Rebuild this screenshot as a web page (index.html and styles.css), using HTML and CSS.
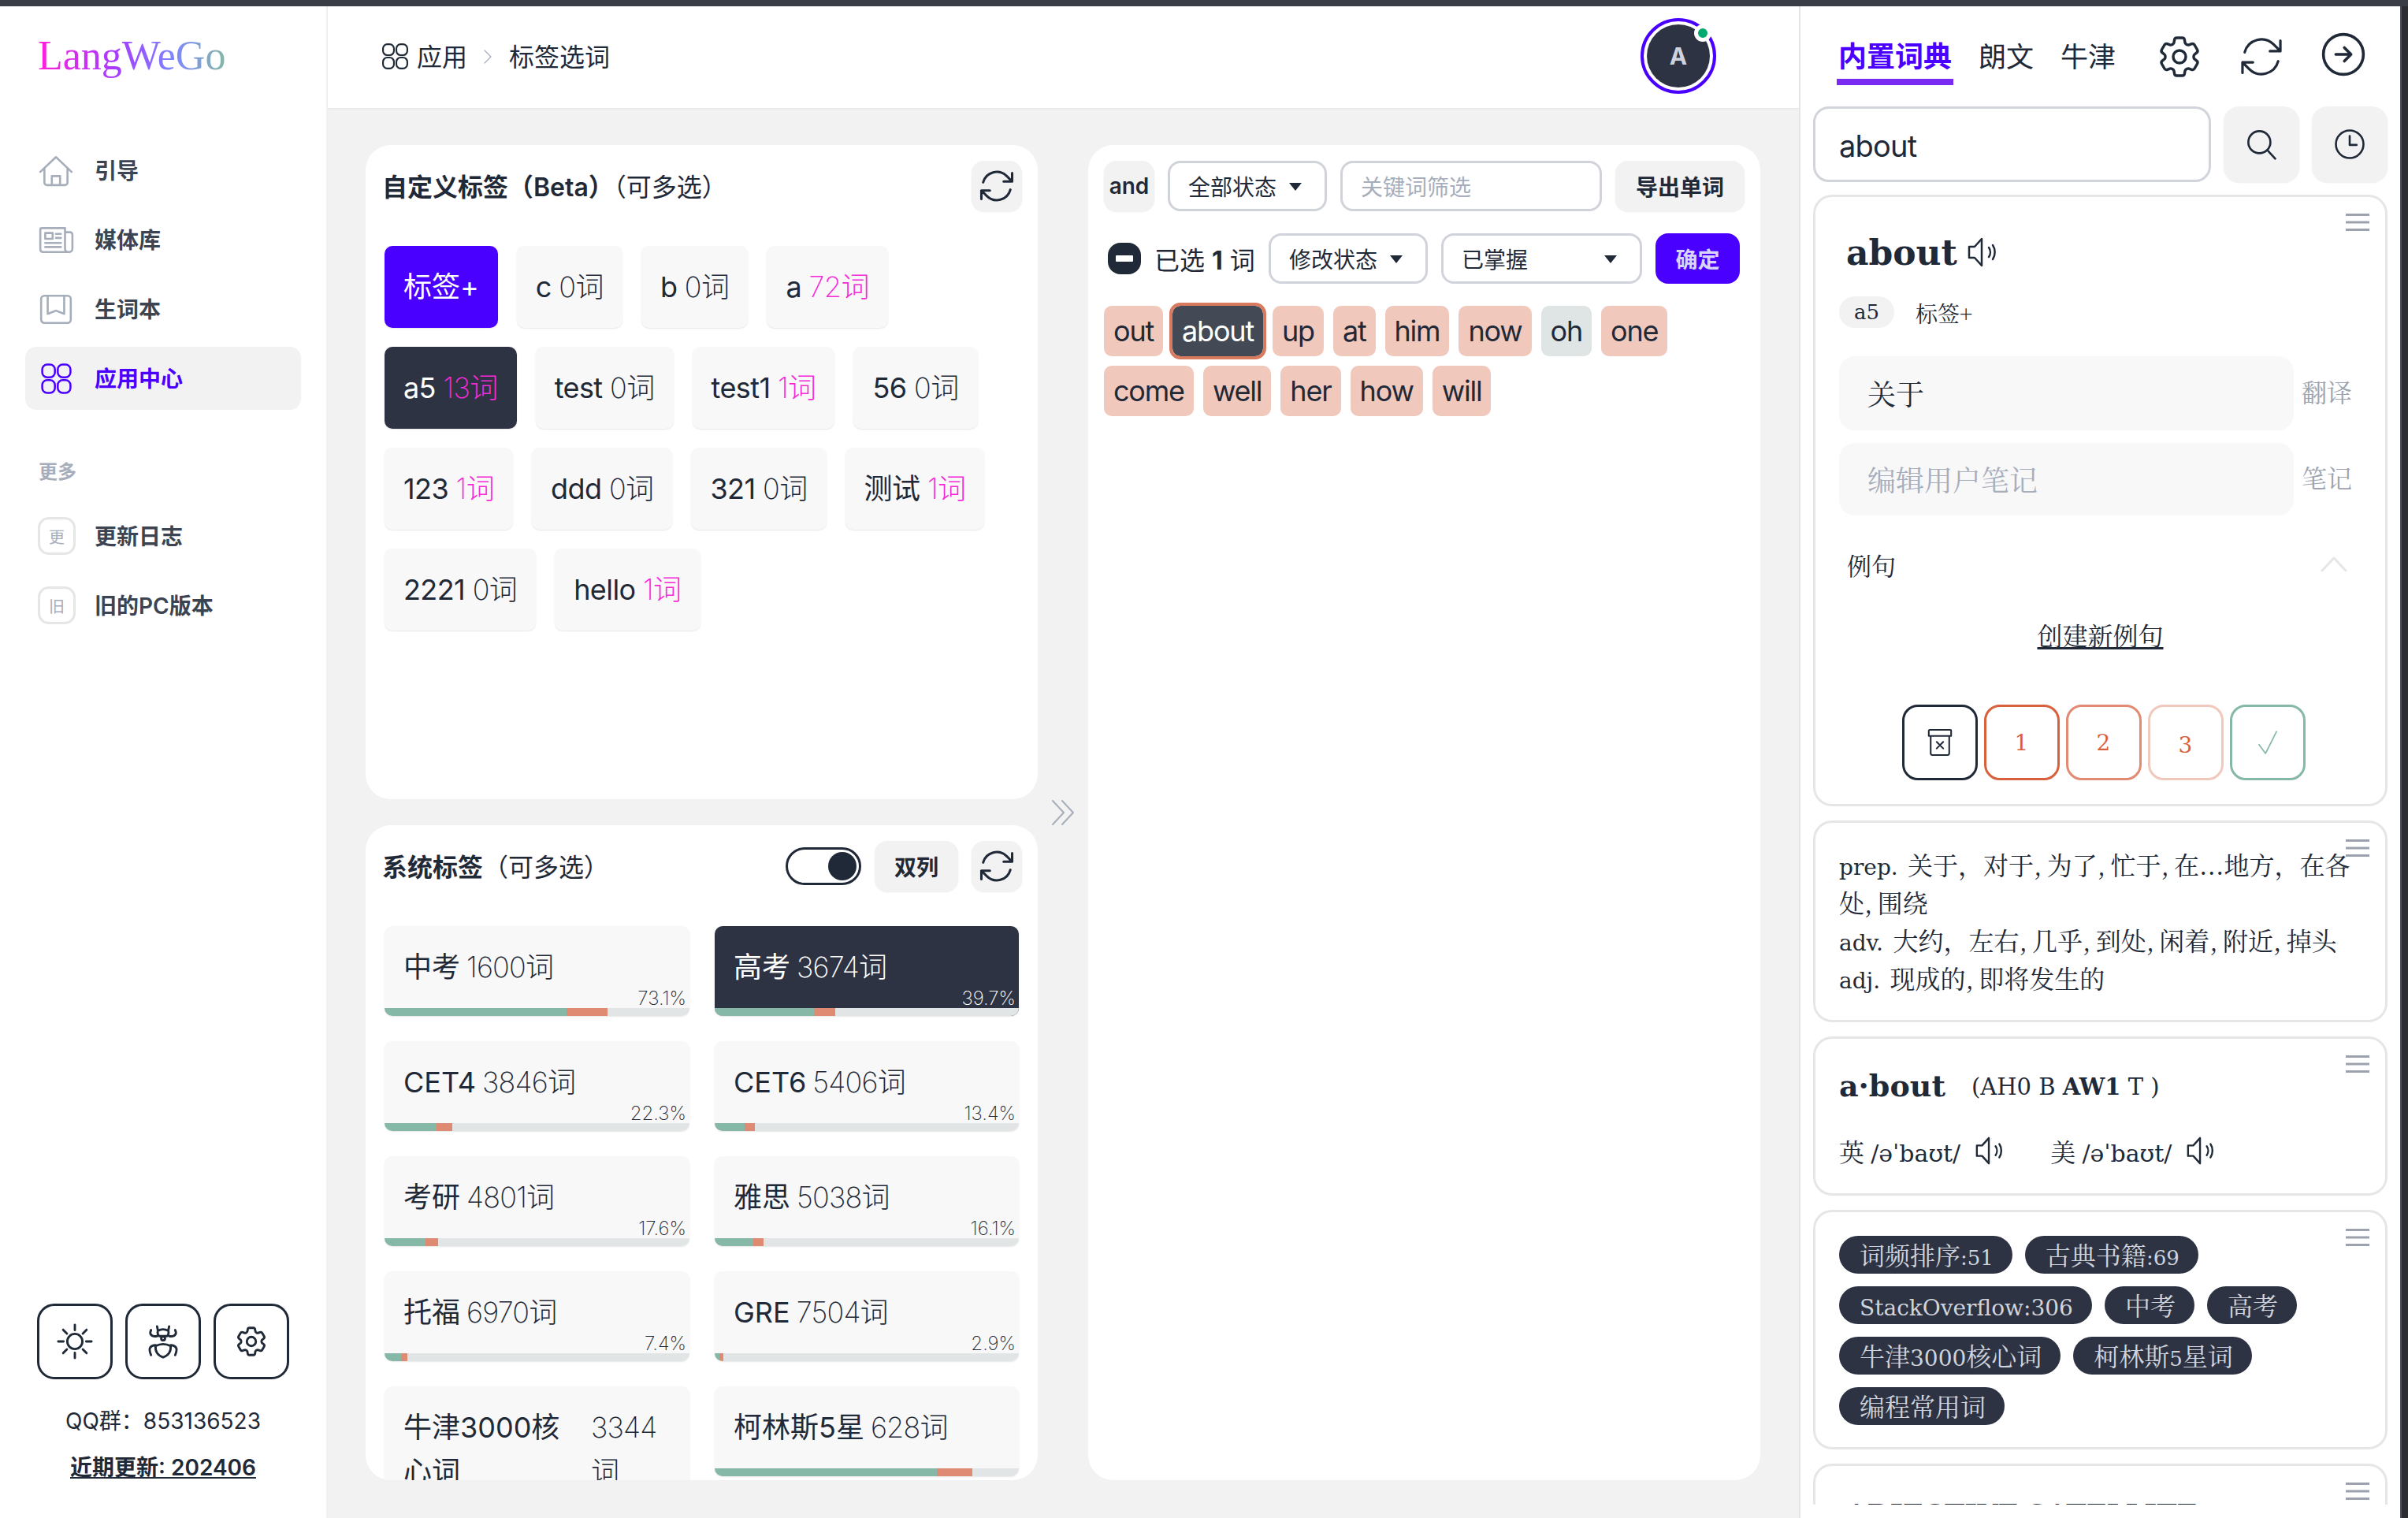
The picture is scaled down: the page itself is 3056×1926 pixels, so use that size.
FILE: index.html
```html
<!DOCTYPE html>
<html lang="zh">
<head>
<meta charset="utf-8">
<title>LangWeGo</title>
<link rel="stylesheet" href="styles.css">
</head>
<body>
<svg class="defs" width="0" height="0">
  <symbol id="i-refresh" viewBox="0 0 24 24"><path d="M16.023 9.348h4.992v-.001M2.985 19.644v-4.992m0 0h4.992m-4.993 0l3.181 3.183a8.25 8.25 0 0013.803-3.7M4.031 9.865a8.25 8.25 0 0113.803-3.7l3.181 3.182m0-4.991v4.99"/></symbol>
  <symbol id="i-gear" viewBox="0 0 24 24"><path d="M9.594 3.94c.09-.542.56-.94 1.11-.94h2.593c.55 0 1.02.398 1.11.94l.213 1.281c.063.374.313.686.645.87.074.04.147.083.22.127.324.196.72.257 1.075.124l1.217-.456a1.125 1.125 0 011.37.49l1.296 2.247a1.125 1.125 0 01-.26 1.431l-1.003.827c-.293.24-.438.613-.431.992a6.759 6.759 0 010 .255c-.007.378.138.75.43.99l1.005.828c.424.35.534.954.26 1.43l-1.298 2.247a1.125 1.125 0 01-1.369.491l-1.217-.456c-.355-.133-.75-.072-1.076.124a6.57 6.57 0 01-.22.128c-.331.183-.581.495-.644.869l-.213 1.28c-.09.543-.56.941-1.11.941h-2.594c-.55 0-1.02-.398-1.11-.94l-.213-1.281c-.062-.374-.312-.686-.644-.87a6.52 6.52 0 01-.22-.127c-.325-.196-.72-.257-1.076-.124l-1.217.456a1.125 1.125 0 01-1.369-.49l-1.297-2.247a1.125 1.125 0 01.26-1.431l1.004-.827c.292-.24.437-.613.43-.992a6.932 6.932 0 010-.255c.007-.378-.138-.75-.43-.99l-1.004-.828a1.125 1.125 0 01-.26-1.43l1.297-2.247a1.125 1.125 0 011.37-.491l1.216.456c.356.133.751.072 1.076-.124.072-.044.146-.087.22-.128.332-.183.582-.495.644-.869l.214-1.281z"/><path d="M15 12a3 3 0 11-6 0 3 3 0 016 0z"/></symbol>
  <symbol id="i-apps" viewBox="0 0 24 24"><rect x="2" y="2" width="9" height="9" rx="3.500"/><rect x="13" y="2" width="9" height="9" rx="3.500"/><rect x="2" y="13" width="9" height="9" rx="3.500"/><rect x="13" y="13" width="9" height="9" rx="3.500"/></symbol>
  <symbol id="i-speaker" viewBox="0 0 40 40"><path d="M3 13h7l9-10v34l-9-10H3z"/><path d="M28 14c2.500 3.500 2.500 8.500 0 12M33 11c3.500 5 3.500 13 0 18" /></symbol>
  <symbol id="i-menu" viewBox="0 0 30 22"><path d="M0 1.500h30M0 11h30M0 20.500h30"/></symbol>
</svg>
<div class="topbar"></div>
<div class="shell">
  <aside class="sidebar">
    <div class="logo-row"><span class="logo">LangWeGo</span></div>
    <nav class="nav">
      <a class="nav-item">
        <svg class="nav-icon" viewBox="0 0 44 44"><path d="M3 24 22 6l19 18M8 20v17a3 3 0 0 0 3 3h22a3 3 0 0 0 3-3V20M17 40V29h10v11"/></svg>
        <span>引导</span></a>
      <a class="nav-item">
        <svg class="nav-icon" viewBox="0 0 44 44"><path d="M33 8H5a2 2 0 0 0-2 2v24a3 3 0 0 0 3 3h32a4 4 0 0 0 4-4V16a3 3 0 0 0-3-3h-6zM33 8v25a4 4 0 0 0 4 4M9 14h9v7H9zM22 15h6M22 20h6M9 26h19M9 31h19"/></svg>
        <span>媒体库</span></a>
      <a class="nav-item">
        <svg class="nav-icon" viewBox="0 0 44 44"><rect x="4" y="6" width="36" height="33" rx="4"/><path d="M12 6v22l10-4 10 4V6"/></svg>
        <span>生词本</span></a>
      <a class="nav-item active">
        <svg class="nav-icon" viewBox="0 0 24 24"><use href="#i-apps"/></svg>
        <span>应用中心</span></a>
    </nav>
    <div class="nav-label">更多</div>
    <nav class="nav">
      <a class="nav-item"><span class="nav-badge">更</span><span>更新日志</span></a>
      <a class="nav-item"><span class="nav-badge">旧</span><span>旧的PC版本</span></a>
    </nav>
    <div class="side-foot">
      <div class="side-btns">
        <button class="side-btn"><svg viewBox="0 0 48 48"><circle cx="24" cy="24" r="10"/><path d="M24 2v7M24 39v7M2 24h7M39 24h7M8.500 8.500l5 5M34.500 34.500l5 5M8.500 39.500l5-5M34.500 13.500l5-5"/></svg></button>
        <button class="side-btn"><svg viewBox="-24 -24 48 48"><path d="M-8-20l1 5M8-20l-1 5M-7-14q7-4 14 0q1 5-2 7h-10q-3-2-2-7zM-2.500-4a2.500 2.500 0 1 0 5 0a2.500 2.500 0 1 0-5 0M-10 6q10-5 20 0q1 11-10 15q-11-4-10-15zM-16-15q-2 4 0 6q2 3 8 2M16-15q2 4 0 6q-2 3-8 2M-16 18q-3-7-1-10q2-3 7-3M16 18q3-7 1-10q-2-3-7-3"/></svg></button>
        <button class="side-btn"><svg viewBox="0 0 24 24" class="thin"><use href="#i-gear"/></svg></button>
      </div>
      <div class="qq">QQ群：853136523</div>
      <a class="recent">近期更新: 202406</a>
    </div>
  </aside>

  <div class="center">
    <header class="header">
      <div class="crumbs">
        <svg class="crumb-icon" viewBox="0 0 24 24"><use href="#i-apps"/></svg>
        <span>应用</span>
        <svg class="crumb-sep" viewBox="0 0 12 24"><path d="M2 4l8 8-8 8"/></svg>
        <span>标签选词</span>
      </div>
      <div class="avatar"><div class="avatar-inner">A</div><span class="avatar-dot"></span></div>
    </header>

    <main class="content">
      <section class="col-left">
        <div class="card">
          <div class="card-head">
            <h2 class="card-title">自定义标签（Beta）<span class="normal">（可多选）</span></h2>
            <button class="soft-btn square"><svg class="refresh" viewBox="0 0 24 24"><use href="#i-refresh"/></svg></button>
          </div>
          <div class="tags">
            <div class="tag primary">标签+</div>
            <div class="tag">c <span class="cnt">0词</span></div>
            <div class="tag">b <span class="cnt">0词</span></div>
            <div class="tag">a <span class="cnt pink">72词</span></div>
            <div class="tag dark">a5 <span class="cnt pink">13词</span></div>
            <div class="tag">test <span class="cnt">0词</span></div>
            <div class="tag">test1 <span class="cnt pink">1词</span></div>
            <div class="tag">56 <span class="cnt">0词</span></div>
            <div class="tag">123 <span class="cnt pink">1词</span></div>
            <div class="tag">ddd <span class="cnt">0词</span></div>
            <div class="tag">321 <span class="cnt">0词</span></div>
            <div class="tag">测试 <span class="cnt pink">1词</span></div>
            <div class="tag">2221 <span class="cnt">0词</span></div>
            <div class="tag">hello <span class="cnt pink">1词</span></div>
          </div>
        </div>
        <div class="card">
          <div class="card-head">
            <h2 class="card-title">系统标签<span class="normal">（可多选）</span></h2>
            <div class="head-tools">
              <span class="toggle"><span class="knob"></span></span>
              <button class="soft-btn wide">双列</button>
              <button class="soft-btn square"><svg class="refresh" viewBox="0 0 24 24"><use href="#i-refresh"/></svg></button>
            </div>
          </div>
          <div class="sys-grid">
            <div class="sys"><div class="sys-text"><span class="sys-name">中考</span><span class="sys-cnt">1600词</span></div><div class="sys-pct">73.1%</div><div class="bar"><i class="seg-g" style="width:59.6%"></i><i class="seg-o" style="width:13.6%"></i></div></div>
            <div class="sys dark"><div class="sys-text"><span class="sys-name">高考</span><span class="sys-cnt">3674词</span></div><div class="sys-pct">39.7%</div><div class="bar"><i class="seg-g" style="width:32.7%"></i><i class="seg-o" style="width:7%"></i></div></div>
            <div class="sys"><div class="sys-text"><span class="sys-name">CET4</span><span class="sys-cnt">3846词</span></div><div class="sys-pct">22.3%</div><div class="bar"><i class="seg-g" style="width:17%"></i><i class="seg-o" style="width:5.2%"></i></div></div>
            <div class="sys"><div class="sys-text"><span class="sys-name">CET6</span><span class="sys-cnt">5406词</span></div><div class="sys-pct">13.4%</div><div class="bar"><i class="seg-g" style="width:9.9%"></i><i class="seg-o" style="width:3.3%"></i></div></div>
            <div class="sys"><div class="sys-text"><span class="sys-name">考研</span><span class="sys-cnt">4801词</span></div><div class="sys-pct">17.6%</div><div class="bar"><i class="seg-g" style="width:13.5%"></i><i class="seg-o" style="width:4.1%"></i></div></div>
            <div class="sys"><div class="sys-text"><span class="sys-name">雅思</span><span class="sys-cnt">5038词</span></div><div class="sys-pct">16.1%</div><div class="bar"><i class="seg-g" style="width:12.6%"></i><i class="seg-o" style="width:3.5%"></i></div></div>
            <div class="sys"><div class="sys-text"><span class="sys-name">托福</span><span class="sys-cnt">6970词</span></div><div class="sys-pct">7.4%</div><div class="bar"><i class="seg-g" style="width:5.5%"></i><i class="seg-o" style="width:1.9%"></i></div></div>
            <div class="sys"><div class="sys-text"><span class="sys-name">GRE</span><span class="sys-cnt">7504词</span></div><div class="sys-pct">2.9%</div><div class="bar"><i class="seg-g" style="width:1.5%"></i><i class="seg-o" style="width:1.4%"></i></div></div>
            <div class="sys"><div class="sys-text"><span class="sys-name">牛津3000核心词</span><span class="sys-cnt">3344词</span></div><div class="sys-pct"></div></div>
            <div class="sys"><div class="sys-text"><span class="sys-name">柯林斯5星</span><span class="sys-cnt">628词</span></div><div class="sys-pct"></div><div class="bar"><i class="seg-g" style="width:73%"></i><i class="seg-o" style="width:11.6%"></i></div></div>
          </div>
        </div>
      </section>

      <div class="gutter"><svg class="dbl" viewBox="0 0 32 36"><path d="M3 3l14 15L3 33M15 3l14 15-14 15"/></svg></div>

      <section class="card col-right">
        <div class="tool-row">
          <button class="soft-btn square and">and</button>
          <div class="field sel-state">全部状态<i class="caret"></i></div>
          <div class="field placeholder grow">关键词筛选</div>
          <button class="soft-btn export">导出单词</button>
        </div>
        <div class="tool-row second">
          <span class="check"><i></i></span>
          <span class="picked">已选 <b>1</b> 词</span>
          <div class="field sel-state">修改状态<i class="caret"></i></div>
          <div class="field sel-mastered">已掌握<i class="caret"></i></div>
          <button class="confirm">确定</button>
        </div>
        <div class="chips">
          <span class="chip">out</span><span class="chip current">about</span><span class="chip">up</span><span class="chip">at</span><span class="chip">him</span><span class="chip">now</span><span class="chip gray">oh</span><span class="chip">one</span><span class="chip">come</span><span class="chip">well</span><span class="chip">her</span><span class="chip">how</span><span class="chip">will</span>
        </div>
      </section>
    </main>
  </div>

  <aside class="dict">
    <div class="dict-top">
      <div class="dict-tabs">
        <span class="dict-tab on">内置词典</span>
        <span class="dict-tab">朗文</span>
        <span class="dict-tab">牛津</span>
      </div>
      <div class="dict-icons">
        <span class="slot"><svg class="ic-gear" viewBox="0 0 24 24"><use href="#i-gear"/></svg></span>
        <span class="slot"><svg class="ic-refresh" viewBox="0 0 24 24"><use href="#i-refresh"/></svg></span>
        <span class="slot"><svg class="ic-go" viewBox="0 0 24 24"><circle cx="12" cy="12" r="10.500"/><path d="M8 12h8M12.500 8.500 16 12l-3.500 3.500"/></svg></span>
      </div>
    </div>
    <div class="search-row">
      <div class="search-input">about</div>
      <button class="soft-btn search-btn"><svg viewBox="0 0 24 24"><circle cx="10.500" cy="10.500" r="8"/><path d="m16.500 16.500 5.500 6"/></svg></button>
      <button class="soft-btn search-btn"><svg viewBox="0 0 24 24"><circle cx="12" cy="12" r="10"/><path d="M12 6v6.500h5"/></svg></button>
    </div>
    <div class="dict-scroll">
      <article class="dcard word-card">
        <svg class="menu" viewBox="0 0 30 22"><use href="#i-menu"/></svg>
        <div class="word-line"><span class="word">about</span><svg class="speaker big" viewBox="0 0 40 40"><use href="#i-speaker"/></svg></div>
        <div class="word-tags"><span class="mini-tag">a5</span><span class="mini-add">标签+</span></div>
        <div class="edit-row"><div class="edit-box trans">关于</div><span class="edit-label">翻译</span></div>
        <div class="edit-row note"><div class="edit-box ghost">编辑用户笔记</div><span class="edit-label">笔记</span></div>
        <div class="ex-row"><span>例句</span><svg class="chev" viewBox="0 0 34 20"><path d="M2 18 17 2l15 16"/></svg></div>
        <a class="new-ex">创建新例句</a>
        <div class="rate">
          <button class="rate-btn r0"><svg viewBox="0 0 44 52"><path d="M5 14v32a3 3 0 0 0 3 3h28a3 3 0 0 0 3-3V14M3 3h38a1.500 1.500 0 0 1 1.500 1.500V14h-41V4.500A1.500 1.500 0 0 1 3 3zM16 25l12 12M28 25 16 37"/></svg></button>
          <button class="rate-btn r1">1</button>
          <button class="rate-btn r2">2</button>
          <button class="rate-btn r3">3</button>
          <button class="rate-btn r4"><svg viewBox="0 0 36 46"><path d="M2 27l12 16L34 3"/></svg></button>
        </div>
      </article>
      <article class="dcard defs-card">
        <svg class="menu" viewBox="0 0 30 22"><use href="#i-menu"/></svg>
        <p><span class="lat">prep.</span>&nbsp; 关于，对于, 为了, 忙于, 在...地方，在各处, 围绕</p>
        <p><span class="lat">adv.</span>&nbsp; 大约，左右, 几乎, 到处, 闲着, 附近, 掉头</p>
        <p><span class="lat">adj.</span>&nbsp; 现成的, 即将发生的</p>
      </article>
      <article class="dcard pron-card">
        <svg class="menu" viewBox="0 0 30 22"><use href="#i-menu"/></svg>
        <div class="syll"><b class="syll-word">a·bout</b><span class="syll-ph">(AH0 B <b>AW1</b> T )</span></div>
        <div class="pron-row">
          <span class="pron">英 <span class="lat">/əˈbaʊt/</span></span><svg class="speaker" viewBox="0 0 40 40"><use href="#i-speaker"/></svg>
          <span class="pron us">美 <span class="lat">/əˈbaʊt/</span></span><svg class="speaker" viewBox="0 0 40 40"><use href="#i-speaker"/></svg>
        </div>
      </article>
      <article class="dcard pills-card">
        <svg class="menu" viewBox="0 0 30 22"><use href="#i-menu"/></svg>
        <div class="pills">
          <span class="pill">词频排序<span class="lat">:51</span></span><span class="pill">古典书籍<span class="lat">:69</span></span><span class="pill"><span class="lat wide">StackOverflow:306</span></span><span class="pill">中考</span><span class="pill">高考</span><span class="pill">牛津<span class="lat wide">3000</span>核心词</span><span class="pill">柯林斯<span class="lat">5</span>星词</span><span class="pill">编程常用词</span>
        </div>
      </article>
      <article class="dcard last-card">
        <svg class="menu" viewBox="0 0 30 22"><use href="#i-menu"/></svg>
        <div class="adj-head">ADJECTIVE SATELLITE</div>
      </article>
    </div>
  </aside>
  <div class="edge"></div>
</div>
</body>
</html>
```
FILE: styles.css
```css
* { box-sizing: border-box; }
html, body { margin: 0; height: 100%; }
body {
  width: 3056px; height: 1926px; overflow: hidden;
  display: flex; flex-direction: column;
  background: #f2f2f2; color: #1f2937;
  font-family: "Inter", "Noto Sans CJK SC", sans-serif;
  font-size: 28px;
}
.defs { position: absolute; }
button { font: inherit; color: inherit; border: 0; background: none; padding: 0; }
svg { fill: none; stroke: currentColor; stroke-linecap: round; stroke-linejoin: round; display: block; flex: none; }
.topbar { height: 8px; background: #3a3d45; flex: none; }
.shell { flex: 1; min-height: 0; display: flex; }

/* sidebar */
.sidebar { width: 414px; margin-right: 2px; background: #fff; display: flex; flex-direction: column; flex: none; }
.logo-row { height: 126px; padding-left: 48px; display: flex; align-items: center; }
.logo {
  font-family: "Liberation Serif", serif; font-size: 52px; line-height: 1.2;
  background: linear-gradient(90deg, #ff1fd8 0%, #a63cff 42%, #7c86ff 72%, #84b8a6 100%);
  -webkit-background-clip: text; background-clip: text; color: transparent;
}
.nav { padding: 0 32px; display: flex; flex-direction: column; gap: 8px; }
.logo-row + .nav { margin-top: 42px; }
.nav-item { height: 80px; padding-left: 16px; border-radius: 14px; display: flex; align-items: center; gap: 24px; font-weight: 600; color: #3d4451; }
.nav-item span:last-child { padding-bottom: 2px; }
.nav-item.active { background: #f2f2f2; color: #4a00ff; }
.nav-icon { width: 46px; height: 46px; margin-right: 2px; color: #a6adbb; stroke-width: 2.5; }
.nav-item.active .nav-icon { color: #4a00ff; width: 43px; height: 43px; margin: 0 3px 0 2px; stroke-width: 1.4; }
.nav-badge { width: 48px; height: 48px; border: 3px solid #e5e6e6; border-radius: 14px; display: flex; align-items: center; justify-content: center; font-size: 20px; font-weight: 400; color: #a6adbb; }
.nav-label { margin: 60px 0 20px 49px; height: 40px; line-height: 38px; font-size: 24px; font-weight: 600; color: #a6adbb; }
.side-foot { margin-top: auto; padding-bottom: 44px; text-align: center; }
.side-btns { display: flex; justify-content: center; gap: 16px; }
.side-btn { width: 96px; height: 96px; border: 3px solid #1f2937; border-radius: 22px; display: flex; align-items: center; justify-content: center; }
.side-btn svg { width: 46px; height: 46px; stroke-width: 3; }
.side-btn svg.thin { width: 46px; height: 46px; stroke-width: 1.5; }
.qq { margin-top: 33px; line-height: 40px; }
.recent { display: block; margin-top: 19px; line-height: 40px; font-weight: 600; text-decoration: underline; }

/* center */
.center { width: 1867px; flex: none; display: flex; flex-direction: column; }
.header { height: 129px; flex: none; background: #fff; box-shadow: 0 1px 2px rgba(0,0,0,.06); display: flex; align-items: center; justify-content: space-between; padding: 0 105px 0 67px; position: relative; }
.crumbs { display: flex; align-items: center; font-size: 32px; margin-bottom: 5px; }
.crumb-icon { width: 37px; height: 37px; stroke-width: 1.4; margin-right: 9px; margin-top: 3px; }
.crumb-sep { width: 12px; height: 24px; stroke-width: 1.2; color: #a6adbb; margin: 3px 21px 0 20px; }
.avatar { width: 96px; height: 96px; border: 4px solid #4a00ff; border-radius: 50%; padding: 4px; position: relative; margin-bottom: 3px; }
.avatar-inner { width: 100%; height: 100%; border-radius: 50%; background: #2d3342; color: #d0d3dc; font-weight: 700; font-size: 30px; display: flex; align-items: center; justify-content: center; }
.avatar-dot { position: absolute; top: 4px; right: 2px; width: 22px; height: 22px; border: 5px solid #fff; border-radius: 50%; background: #00a96e; }
.content { flex: 1; min-height: 0; display: flex; padding: 47px 49px 48px 48px; }
.col-left { width: 853px; flex: none; display: grid; grid-template-rows: 830px 831px; row-gap: 33px; min-height: 0; }
.gutter { width: 64px; flex: none; display: flex; align-items: center; justify-content: center; }
.dbl { width: 32px; height: 36px; color: #a6adbb; stroke-width: 2; }
.card { background: #fff; border-radius: 32px; overflow: hidden; padding: 20px 20px 0 24px; min-height: 0; }
.card-head { height: 64px; display: flex; align-items: center; justify-content: space-between; margin-bottom: 44px; }
.card-title { margin: 0 0 2px -3px; font-size: 32px; font-weight: 600; }
.normal { font-weight: 400; }
.soft-btn { background: #f2f2f2; border-radius: 16px; box-shadow: 0 1px 2px rgba(0,0,0,.08); font-weight: 600; display: flex; align-items: center; justify-content: center; flex: none; }
.square { width: 64px; height: 64px; }
.wide { width: 106px; height: 64px; }
.refresh { width: 52px; height: 52px; stroke-width: 1.4; }
.head-tools { display: flex; align-items: center; gap: 17px; }
.toggle { width: 96px; height: 48px; border: 3px solid #1f2937; border-radius: 24px; display: flex; align-items: center; justify-content: flex-end; padding-right: 3px; }
.knob { width: 36px; height: 36px; border-radius: 50%; background: #1f2937; }
.tags { display: flex; flex-wrap: wrap; gap: 24px; }
.tag { height: 104px; padding: 0 24px; border-radius: 10px; background: #f8f8f8; box-shadow: 0 1px 2px rgba(0,0,0,.1); font-size: 36px; line-height: 104px; white-space: nowrap; letter-spacing: -.6px; }
.tag.primary { background: #4a00ff; color: #fff; letter-spacing: 0; }
.tag.dark { background: #2d3342; color: #fff; }
.cnt { font-weight: 200; }
.pink { color: #f62ad8; }
.sys-grid { display: grid; grid-template-columns: 387px 386px; column-gap: 32px; row-gap: 32px; align-items: start; }
.sys { background: #f8f8f8; border-radius: 10px; box-shadow: 0 1px 2px rgba(0,0,0,.1); overflow: hidden; }
.sys.dark { background: #2d3342; color: #fff; }
.sys-text { display: flex; gap: 8px; padding: 24px 24px 0; font-size: 36px; line-height: 56px; }
.sys-cnt { font-weight: 200; letter-spacing: -.8px; }
.sys-pct { height: 24px; line-height: 24px; text-align: right; padding-right: 4px; font-size: 24px; font-weight: 200; }
.bar { height: 10px; background: #e2e5e5; display: flex; }
.seg-g { background: #86b8a8; }
.seg-o { background: #df8a72; }

/* right card */
.col-right { width: 853px; flex: none; padding: 20px; }
.tool-row { display: flex; align-items: center; gap: 17px; height: 64px; }
.tool-row.second { margin-top: 28px; }
.and { font-size: 28px; }
.field { height: 64px; border: 3px solid #d1d3da; border-radius: 16px; display: flex; align-items: center; padding: 0 23px; background: #fff; position: relative; flex: none; }
.sel-state { width: 202px; }
.sel-mastered { width: 255px; }
.caret { position: absolute; right: 29px; top: 25px; border: 8px solid transparent; border-top: 10px solid #1f2937; border-bottom: 0; }
.placeholder { color: #a6adbb; }
.grow { flex: 1; }
.export { width: 164px; height: 64px; }
.check { width: 42px; height: 40px; margin-left: 5px; border-radius: 16px; background: #1f2937; display: flex; align-items: center; justify-content: center; flex: none; }
.check i { width: 22px; height: 8px; background: #fff; border-radius: 1px; }
.picked { font-size: 32px; width: 128px; white-space: nowrap; flex: none; }
.confirm { width: 107px; height: 64px; border-radius: 16px; background: #4a00ff; color: #d8d4ff; font-weight: 600; flex: none; }
.chips { margin-top: 28px; display: flex; flex-wrap: wrap; gap: 12px; }
.chip { height: 64px; line-height: 64px; padding: 0 12px; border-radius: 10px; background: #f0c8bc; font-size: 36px; letter-spacing: -1.2px; }
.chip.gray { background: #dfe5e5; }
.chip.current { background: #434a55; color: #fff; outline: 4px solid #d97a5e; }

/* dictionary */
.dict { width: 763px; flex: none; background: #fff; border-left: 2px solid #e5e6e6; display: flex; flex-direction: column; padding: 0 16px 17px 16px; font-family: "Noto Serif CJK SC", "Noto Sans CJK SC", serif; font-size: 32px; font-weight: 400; }
.lat { font-family: "DejaVu Serif", "Noto Sans CJK SC", serif; font-size: 28px; line-height: 1; }
.dict-top { height: 127px; flex: none; display: flex; align-items: center; justify-content: space-between; padding: 0 4px 0 32px; font-family: "Inter", "Noto Sans CJK SC", sans-serif; }
.dict-tabs { display: flex; gap: 34px; font-size: 35px; }
.dict-tab { position: relative; line-height: 60px; }
.dict-tab.on { color: #4a00ff; font-weight: 600; font-size: 36px; }
.dict-tab.on::after { content: ""; position: absolute; left: -2px; right: -2px; top: 58px; height: 8px; background: #7a2bf0; }
.dict-icons { display: flex; }
.slot { width: 104px; display: flex; justify-content: center; }
.ic-gear { width: 64px; height: 64px; stroke-width: 1.3; }
.ic-refresh { width: 68px; height: 64px; stroke-width: 1.2; }
.ic-go { width: 58px; height: 58px; stroke-width: 1.5; }
.search-row { display: flex; gap: 16px; height: 96px; flex: none; margin-bottom: 16px; font-family: "Inter", "Noto Sans CJK SC", sans-serif; }
.search-input { flex: 1; border: 3px solid #d1d5db; border-radius: 20px; padding-left: 30px; font-size: 38px; line-height: 94px; letter-spacing: -.8px; }
.search-btn { width: 96px; height: 96px; border-radius: 20px; }
.search-btn svg { width: 42px; height: 42px; stroke-width: 1.5; }
.dict-scroll { flex: 1; min-height: 0; overflow: hidden; display: flex; flex-direction: column; gap: 18px; }
.dcard { position: relative; border: 3px solid #e5e6e6; border-radius: 24px; padding: 28px 30px 30px; flex: none; }
.menu { position: absolute; top: 21px; right: 20px; width: 30px; height: 22px; color: #9ca3af; stroke-width: 3; stroke-linecap: butt; }
.word-card { padding-top: 35px; }
.word-line { height: 70px; display: flex; align-items: center; gap: 12px; padding-left: 9px; }
.word { font-family: "DejaVu Serif", serif; font-size: 44px; font-weight: 700; }
.speaker { width: 38px; height: 38px; stroke-width: 2.5; }
.speaker.big { width: 40px; height: 52px; }
.word-tags { margin-top: 21px; display: flex; align-items: center; gap: 27px; height: 40px; }
.mini-tag { width: 70px; height: 40px; border-radius: 20px; background: #f2f2f2; text-align: center; line-height: 40px; font-family: "DejaVu Serif", serif; font-size: 26px; }
.mini-add { font-size: 28px; padding-top: 2px; }
.edit-row { margin-top: 36px; display: flex; align-items: center; gap: 10px; }
.edit-row.note { margin-top: 16px; }
.edit-box { width: 577px; border-radius: 20px; background: #f8f8f8; padding-left: 36px; font-size: 36px; }
.trans { height: 94px; line-height: 94px; }
.ghost { height: 92px; line-height: 92px; color: #a6adbb; }
.edit-label { font-size: 32px; color: #9ca3af; margin-bottom: 6px; }
.ex-row { margin-top: 37px; height: 50px; display: flex; align-items: center; justify-content: space-between; padding: 0 18px 0 10px; font-size: 31px; }
.chev { width: 34px; height: 20px; color: #e5e6e6; stroke-width: 3; }
.new-ex { display: block; margin-top: 40px; height: 48px; line-height: 48px; text-align: center; font-size: 32px; text-decoration: underline; }
.rate { margin: 65px 0 0 8px; display: flex; justify-content: center; gap: 8px; }
.rate-btn { width: 96px; height: 96px; border: 3px solid; border-radius: 20px; font-family: "DejaVu Serif", serif; font-size: 28px; display: flex; align-items: center; justify-content: center; }
.r0 { border-color: #1f2937; }
.r0 svg { width: 42px; height: 36px; stroke-width: 3; }
.r1 { border-color: #d9603d; color: #d9603d; }
.r2 { border-color: #e28a73; color: #d9603d; }
.r3 { border-color: #f0c8bc; color: #d9603d; padding-top: 6px; }
.r4 { border-color: #86b8a8; color: #86b8a8; }
.r4 svg { width: 34px; height: 32px; stroke-width: 2.5; }
.defs-card { line-height: 48px; word-spacing: -2px; }
.defs-card p { margin: 0; }
.syll { height: 60px; display: flex; align-items: center; gap: 33px; font-family: "DejaVu Serif", serif; padding-top: 2px; }
.syll-word { font-size: 38px; }
.syll-ph { font-size: 29px; padding-top: 3px; }
.pron-row { margin-top: 30px; height: 48px; display: flex; align-items: center; }
.pron-row .lat { font-size: 30px; }
.pron-row .speaker { margin-left: 18px; }
.pron.us { margin-left: 58px; }
.pills { display: flex; flex-wrap: wrap; gap: 16px; }
.pills-card { padding: 30px 90px 28px 30px; }
.pill { height: 48px; line-height: 46px; padding: 0 24px 0 26px; border-radius: 24px; background: #2d3342; color: #d0d3dc; white-space: nowrap; }
.pill .lat { font-size: 26px; }
.pill .lat.wide { font-size: 28px; }
.last-card { padding-top: 41px; }
.adj-head { font-family: "DejaVu Serif", serif; font-size: 34px; line-height: 40px; margin-left: 9px; font-weight: 700; white-space: nowrap; }
.edge { width: 10px; flex: none; background: #2c2d30; border-left: 2px solid #4b4e56; }
```
